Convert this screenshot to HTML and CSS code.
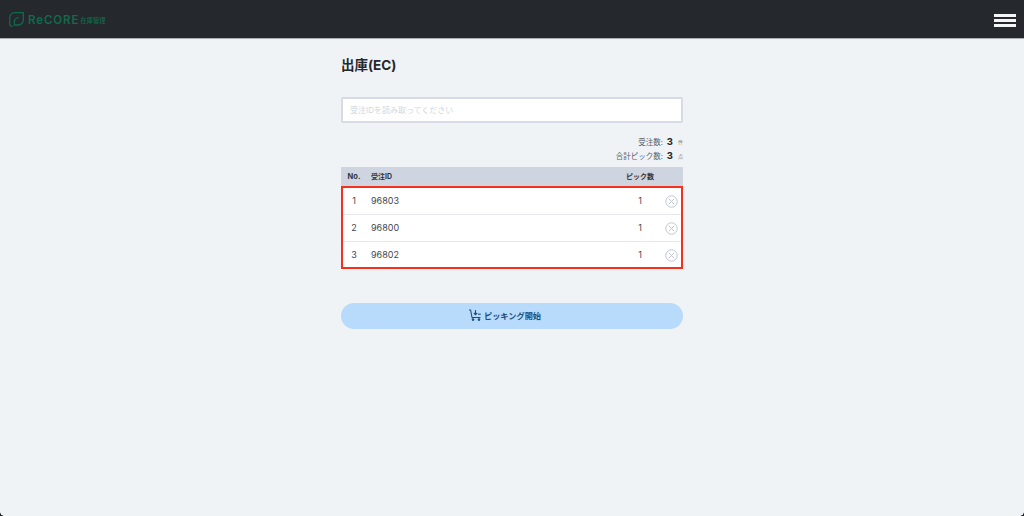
FILE: index.html
```html
<!DOCTYPE html>
<html lang="ja">
<head>
<meta charset="utf-8">
<title>出庫(EC)</title>
<link rel="stylesheet" href="styles.css">
</head>
<body>
<div class="page">
  <header class="topbar">
    <div class="brand">
      <svg class="leaf" width="15" height="15" viewBox="0 0 15 15" fill="none" stroke="#0f6b4b" stroke-width="1.3">
        <path d="M3.6 14.3H3A2.3 2.3 0 0 1 .7 12V5.5A4.8 4.8 0 0 1 5.5.7H14.3V8A5 5 0 0 1 9.3 13H5.3V10A4.6 4.6 0 0 1 9.8 5.6"/>
      </svg>
      <span class="brand-name">ReCORE</span>
      <span class="brand-sub">在庫管理</span>
    </div>
    <div class="burger"><span></span><span></span><span></span></div>
  </header>
  <main class="content">
    <h1 class="title">出庫(EC)</h1>
    <input class="scan" type="text" placeholder="受注IDを読み取ってください">
    <div class="stats">
      <div class="stat"><span class="stat-label">受注数:</span><b class="stat-value">3</b><span class="stat-unit">件</span></div>
      <div class="stat"><span class="stat-label">合計ピック数:</span><b class="stat-value">3</b><span class="stat-unit">点</span></div>
    </div>
    <div class="table">
      <div class="row head">
        <span class="c-no">No.</span><span class="c-id">受注ID</span><span class="c-pick">ピック数</span><span class="c-x"></span>
      </div>
      <div class="rows">
        <div class="row item">
          <span class="c-no">1</span><span class="c-id">96803</span><span class="c-pick">1</span>
          <span class="c-x"><svg width="13" height="13" viewBox="0 0 13 13" fill="none" stroke="#c0c6d3" stroke-width="1"><circle cx="6.5" cy="6.5" r="5.7"/><path d="M3.8 3.8l5.4 5.4M9.2 3.8l-5.4 5.4"/></svg></span>
        </div>
        <div class="row item">
          <span class="c-no">2</span><span class="c-id">96800</span><span class="c-pick">1</span>
          <span class="c-x"><svg width="13" height="13" viewBox="0 0 13 13" fill="none" stroke="#c0c6d3" stroke-width="1"><circle cx="6.5" cy="6.5" r="5.7"/><path d="M3.8 3.8l5.4 5.4M9.2 3.8l-5.4 5.4"/></svg></span>
        </div>
        <div class="row item">
          <span class="c-no">3</span><span class="c-id">96802</span><span class="c-pick">1</span>
          <span class="c-x"><svg width="13" height="13" viewBox="0 0 13 13" fill="none" stroke="#c0c6d3" stroke-width="1"><circle cx="6.5" cy="6.5" r="5.7"/><path d="M3.8 3.8l5.4 5.4M9.2 3.8l-5.4 5.4"/></svg></span>
        </div>
        <div class="highlight"></div>
      </div>
    </div>
    <button class="start" type="button">
      <svg width="12" height="12" viewBox="0 0 12 12" fill="none" stroke="#1f4f7c" stroke-width="1.1">
        <path d="M0 1H1.6L3 8.5H11.5"/><path d="M6.5 1v4.5M4.8 4l1.7 1.7L8.2 4"/><path d="M9 5.2h2.8"/>
        <circle cx="4" cy="10.6" r="0.8" fill="#1f4f7c"/><circle cx="10" cy="10.6" r="0.8" fill="#1f4f7c"/>
      </svg>
      <span>ピッキング開始</span>
    </button>
  </main>
  <i class="corner left"></i><i class="corner right"></i>
</div>
</body>
</html>
```
FILE: styles.css
```css
* { box-sizing: border-box; }
html, body { margin: 0; height: 100%; }
body {
  background: #eff3f6;
  font-family: "Inter", "Liberation Sans", "Noto Sans CJK JP", sans-serif;
  color: #30343a;
  overflow: hidden;
}
.page { position: relative; height: 516px; overflow: hidden; }
.topbar {
  height: 39px;
  background: #25292e;
  border-bottom: 1px solid #a9afb5;
  display: flex;
  align-items: center;
  justify-content: space-between;
  padding: 0 8px 0 9px;
}
.brand { display: flex; align-items: center; color: #0f6b4b; padding-top: 1px; }
.leaf { margin-right: 4px; }
.brand-name { font-size: 11.5px; font-weight: 600; letter-spacing: 0.9px; line-height: 16px; }
.brand-sub { font-size: 6.3px; margin-left: 1px; padding-top: 2px; font-weight: 500; }
.burger { display: flex; flex-direction: column; gap: 2px; width: 22px; margin-top: 2px; }
.burger span { display: block; height: 3px; background: #f4f5f6; }
.content { width: 342px; margin: 0 auto; padding-top: 17px; display: flex; flex-direction: column; }
.title { margin: 0 0 23px; font-size: 13.5px; line-height: 18px; font-weight: 700; color: #24272b; }
.scan {
  display: block;
  width: 100%;
  height: 26px;
  padding: 0 7px;
  background: #fff;
  border: 2px solid #d6dbe5;
  border-radius: 2px;
  font: 8px "Inter", "Noto Sans CJK JP", sans-serif;
  outline: none;
}
.scan::placeholder { color: #d2d7e0; opacity: 1; }
.stats { margin-top: 12px; display: flex; flex-direction: column; align-items: flex-end; gap: 2px; }
.stat { display: flex; align-items: center; height: 12px; font-size: 7.5px; color: #5b6068; }
.stat-value { font-size: 9.5px; color: #24272b; margin: 0 5px 0 4px; }
.stat-unit { font-size: 5px; color: #7a8088; width: 5px; }
.table { margin-top: 6px; }
.row { display: flex; align-items: center; }
.head { height: 20px; padding-bottom: 2px; background: #ced4e0; font-size: 7px; font-weight: 700; color: #30343a; }
.head .c-no { font-size: 7.5px; }
.rows { position: relative; background: #fff; padding-top: 1px; }
.item { height: 27px; padding-bottom: 2px; border-bottom: 1px solid #e6e8f0; font-size: 9px; color: #43474d; }
.item:last-of-type { border-bottom: 0; height: 26px; }
.c-no { width: 26px; flex: none; margin-right: 4px; text-align: center; }
.c-id { flex: 1; }
.c-pick { width: 42px; text-align: center; flex: none; margin-right: -2px; margin-left: -1px; }
.c-x { width: 24px; flex: none; display: flex; justify-content: center; padding-top: 2px; }
.highlight {
  position: absolute;
  inset: -1px 0 0 0;
  border: 2px solid #f5301f;
  pointer-events: none;
}
.start {
  margin-top: 34px;
  height: 26px;
  width: 100%;
  border: 0;
  border-radius: 13px;
  background: #b8dbfb;
  color: #1f4f7c;
  font: 700 8.2px "Inter", "Noto Sans CJK JP", sans-serif;
  display: flex;
  align-items: center;
  justify-content: center;
  gap: 3px;
  padding: 0 14px 2px 0;
}
.corner { position: absolute; bottom: 0; width: 4px; height: 4px; background: radial-gradient(circle at 100% 0, transparent 3.5px, #20242a 4px); }
.corner.left { left: 0; }
.corner.right { right: 0; transform: scaleX(-1); }
```
